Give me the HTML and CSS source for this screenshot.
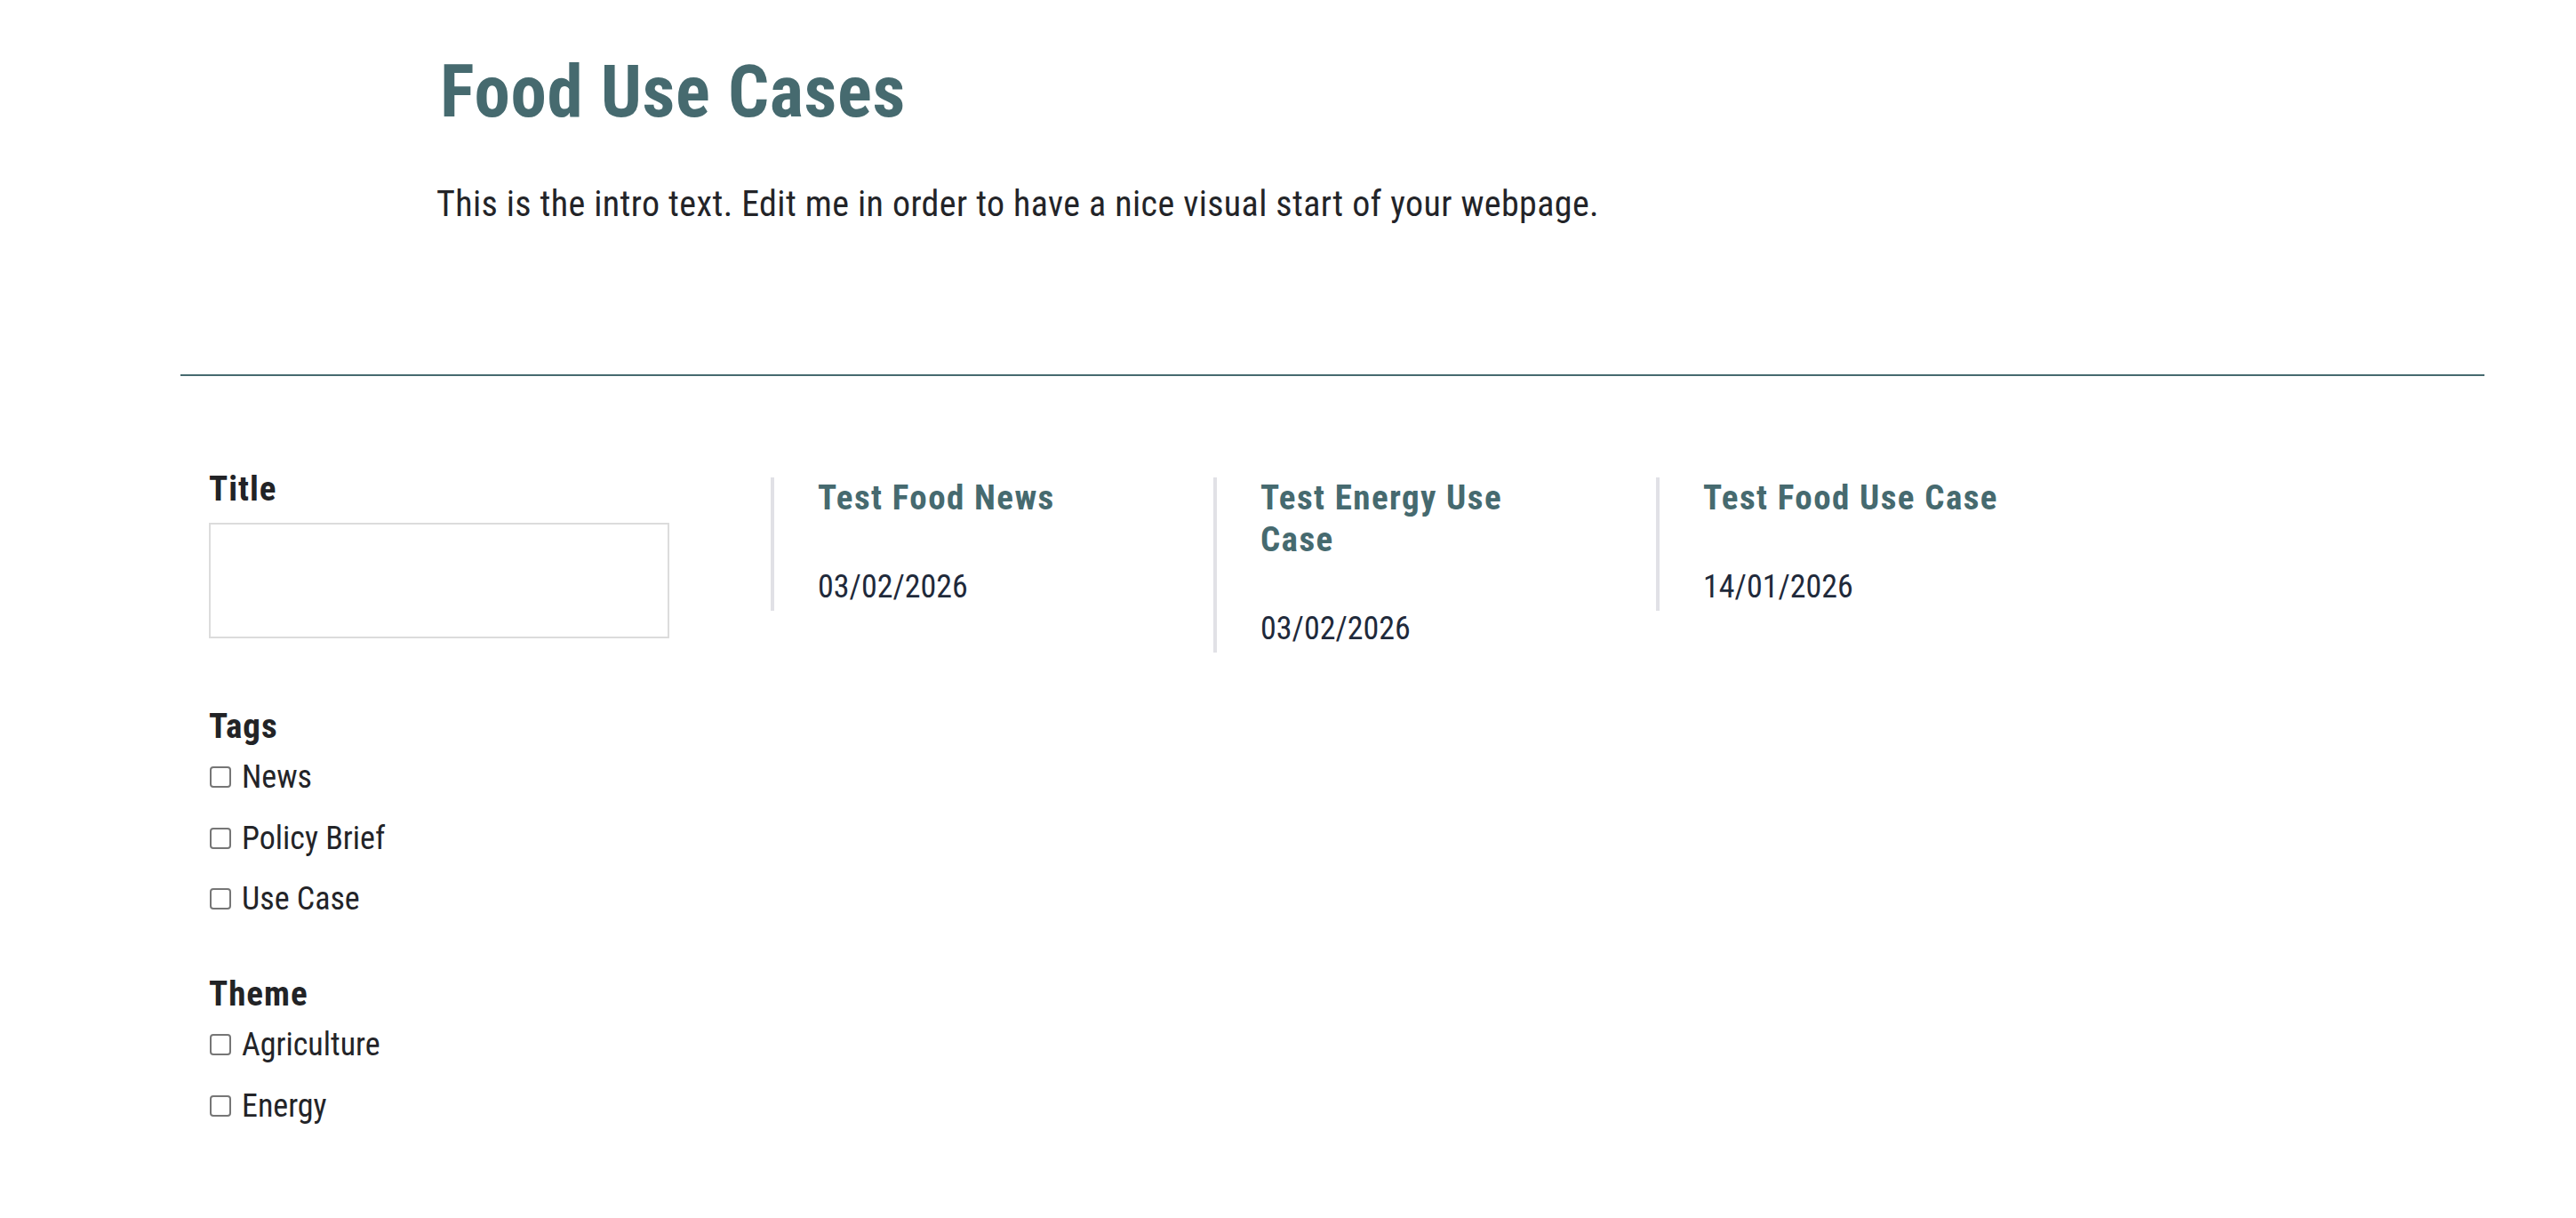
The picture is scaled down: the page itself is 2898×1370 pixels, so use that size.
FILE: index.html
```html
<!DOCTYPE html>
<html lang="en">
<head>
<meta charset="utf-8">
<title>Food Use Cases</title>
<link rel="stylesheet" href="styles.css">
</head>
<body>
<header class="page-header">
  <h1 class="page-title">Food Use Cases</h1>
  <p class="intro-text">This is the intro text. Edit me in order to have a nice visual start of your webpage.</p>
</header>
<hr class="divider">
<main class="listing">
  <aside class="filters">
    <div class="filter-group">
      <label class="filter-label" for="title-search">Title</label>
      <input id="title-search" class="text-input" type="text">
    </div>
    <div class="filter-group filter-tags">
      <div class="filter-label">Tags</div>
      <div class="options">
        <label class="option"><input type="checkbox" class="check"><span>News</span></label>
        <label class="option"><input type="checkbox" class="check"><span>Policy Brief</span></label>
        <label class="option"><input type="checkbox" class="check"><span>Use Case</span></label>
      </div>
    </div>
    <div class="filter-group filter-theme">
      <div class="filter-label">Theme</div>
      <div class="options">
        <label class="option"><input type="checkbox" class="check"><span>Agriculture</span></label>
        <label class="option"><input type="checkbox" class="check"><span>Energy</span></label>
      </div>
    </div>
  </aside>
  <section class="results">
    <article class="card">
      <h2 class="card-title">Test Food News</h2>
      <p class="card-date">03/02/2026</p>
    </article>
    <article class="card">
      <h2 class="card-title">Test Energy Use Case</h2>
      <p class="card-date">03/02/2026</p>
    </article>
    <article class="card">
      <h2 class="card-title">Test Food Use Case</h2>
      <p class="card-date">14/01/2026</p>
    </article>
  </section>
</main>
</body>
</html>
```
FILE: styles.css
```css
* { box-sizing: border-box; }

html, body {
  margin: 0;
  padding: 0;
  background: #ffffff;
}

body {
  font-family: "Roboto Condensed", "Roboto", "DejaVu Sans Condensed", sans-serif;
  font-stretch: condensed;
  color: #232428;
}

.page-header {
  padding: 55px 0 0 495px;
}

.page-title {
  margin: 0;
  font-size: 81px;
  line-height: 97px;
  font-weight: 700;
  letter-spacing: 0.7px;
  color: #466a6f;
}

.intro-text {
  margin: 49px 0 0 -4px;
  font-size: 40px;
  line-height: 58px;
  letter-spacing: 0.4px;
  color: #232428;
}

.divider {
  margin: 162px 103px 0 203px;
  border: 0;
  height: 2px;
  background: #466a6f;
}

.listing {
  display: grid;
  grid-template-columns: 518px 1fr;
  column-gap: 114px;
  padding: 104px 0 0 235px;
}

.filters {
  display: flex;
  flex-direction: column;
}

.filter-label {
  display: block;
  font-size: 39px;
  line-height: 47px;
  font-weight: 700;
  letter-spacing: 1px;
  color: #222326;
}

.text-input {
  display: block;
  margin-top: 14px;
  width: 518px;
  height: 130px;
  border: 2px solid #dcdcdc;
  border-radius: 0;
  background: #fff;
  font: inherit;
  font-size: 36px;
  padding: 0 16px;
}

.filter-tags {
  margin-top: 76px;
}

.filter-theme {
  margin-top: 57px;
}

.options {
  display: flex;
  flex-direction: column;
  gap: 14.5px;
  margin-top: 6px;
}

.option {
  display: flex;
  align-items: center;
  gap: 12px;
  height: 54px;
  font-size: 36px;
  line-height: 54px;
  color: #232428;
}

.check {
  appearance: none;
  -webkit-appearance: none;
  margin: 0 0 0 1px;
  width: 24px;
  height: 24px;
  border: 2px solid #767676;
  border-radius: 4px;
  background: #fff;
  flex: none;
}

.results {
  display: grid;
  grid-template-columns: repeat(4, 398px);
  column-gap: 100px;
  align-items: start;
  margin-top: 10px;
}

.card {
  border-left: 4px solid #e1e1e6;
  padding-left: 49px;
}

.card-title {
  margin: 0;
  font-size: 39px;
  line-height: 47px;
  font-weight: 700;
  letter-spacing: 1.4px;
  color: #466a6f;
}

.card-date {
  margin: 49px 0 0;
  font-size: 36px;
  line-height: 54px;
  color: #1f2a3b;
}
```
